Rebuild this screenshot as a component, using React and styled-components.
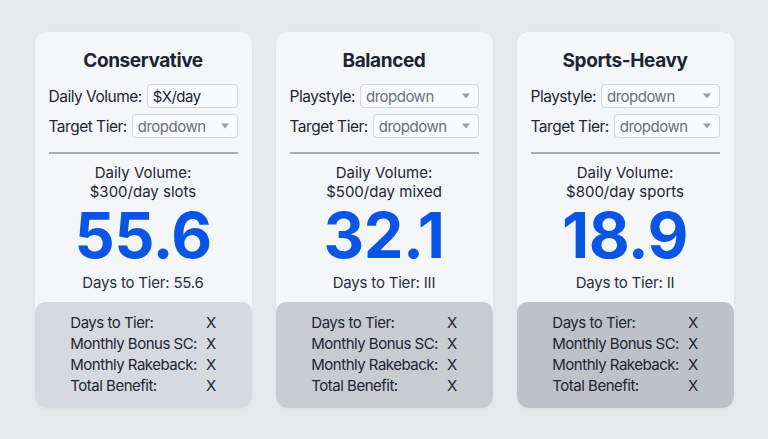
import React from 'react'
import styled, { createGlobalStyle } from 'styled-components'

const GlobalStyle = createGlobalStyle`
  html, body {
    margin: 0;
    padding: 0;
    background: #e6e8ec;
    font-family: Inter, "Noto Sans", "Liberation Sans", sans-serif;
    color: #1f2433;
  }
`

const plans = [
  {
    title: 'Conservative',
    first: { label: 'Daily Volume:', value: '$X/day', input: true },
    volume: '$300/day slots',
    days: '55.6',
    tier: '55.6',
    footer: '#d6d9df',
  },
  {
    title: 'Balanced',
    first: { label: 'Playstyle:', value: 'dropdown' },
    volume: '$500/day mixed',
    days: '32.1',
    tier: 'III',
    footer: '#c8cbd0',
  },
  {
    title: 'Sports-Heavy',
    first: { label: 'Playstyle:', value: 'dropdown' },
    volume: '$800/day sports',
    days: '18.9',
    tier: 'II',
    footer: '#bec2c8',
  },
]

const benefits = ['Days to Tier:', 'Monthly Bonus SC:', 'Monthly Rakeback:', 'Total Benefit:']

function Caret() {
  return (
    <svg width="10" height="6" viewBox="0 0 10 6">
      <path d="M1 0.5 L9 0.5 L5 5.5 Z" fill="#9aa0a9" />
    </svg>
  )
}

function Field({ label, value, input }) {
  return (
    <Row>
      <Label>{label}</Label>
      <Box $input={input}>
        <span>{value}</span>
        {!input && <Caret />}
      </Box>
    </Row>
  )
}

function App() {
  return (
    <Page>
      <GlobalStyle />
      {plans.map(p => (
        <Card key={p.title}>
          <Top>
            <Title>{p.title}</Title>
            <Field {...p.first} />
            <Field label="Target Tier:" value="dropdown" />
            <Divider />
            <Volume>
              Daily Volume:
              <br />
              {p.volume}
            </Volume>
            <BigNumber>{p.days}</BigNumber>
            <TierLine>Days to Tier: {p.tier}</TierLine>
          </Top>
          <Footer $bg={p.footer}>
            <BenefitGrid>
              {benefits.map(b => (
                <React.Fragment key={b}>
                  <span>{b}</span>
                  <span>X</span>
                </React.Fragment>
              ))}
            </BenefitGrid>
          </Footer>
        </Card>
      ))}
    </Page>
  )
}

const Page = styled.div`
  display: flex;
  justify-content: center;
  gap: 24px;
  padding-top: 32px;
  height: 439px;
  box-sizing: border-box;
`

const Card = styled.div`
  width: 217px;
  height: 376px;
  background: #f5f6f8;
  border-radius: 12px;
  display: flex;
  flex-direction: column;
  box-shadow: 0 1px 3px rgba(30, 40, 60, 0.04);
`

const Top = styled.div`
  flex: 1;
  padding: 17px 14px 0;
  display: flex;
  flex-direction: column;
  align-items: stretch;
`

const Title = styled.h2`
  margin: 0 0 11px;
  text-align: center;
  font-size: 19px;
  font-weight: 700;
  line-height: 24px;
  color: #1d2333;
  letter-spacing: -0.4px;
`

const Row = styled.div`
  display: flex;
  align-items: center;
  gap: 5px;
  margin-bottom: 6px;
`

const Label = styled.span`
  font-size: 15.5px;
  letter-spacing: -0.5px;
  white-space: nowrap;
  color: #1f2433;
`

const Box = styled.div`
  flex: 1;
  height: 24px;
  box-sizing: border-box;
  border: 1px solid #d3d6dc;
  border-radius: 4px;
  background: #fafbfc;
  display: flex;
  align-items: center;
  justify-content: space-between;
  padding: 0 7px 0 5px;
  font-size: 15px;
  letter-spacing: -0.5px;
  color: ${p => (p.$input ? '#1f2433' : '#6b7079')};
`

const Divider = styled.div`
  height: 2px;
  background: #a7abb3;
  margin: 8px 0 9px;
`

const Volume = styled.div`
  text-align: center;
  font-size: 15px;
  line-height: 19px;
  color: #1f2433;
`

const BigNumber = styled.div`
  text-align: center;
  font-size: 63px;
  font-weight: 700;
  color: #0b55e6;
  line-height: 56px;
  margin-top: 6px;
  letter-spacing: -0.5px;
`

const TierLine = styled.div`
  text-align: center;
  font-size: 15px;
  letter-spacing: -0.2px;
  line-height: 20px;
  margin-top: 10px;
  color: #2a2f3c;
`

const Footer = styled.div`
  height: 106px;
  background: ${p => p.$bg};
  border-radius: 10px 10px 12px 12px;
  display: flex;
  justify-content: center;
  padding-top: 10px;
  box-sizing: border-box;
`

const BenefitGrid = styled.div`
  display: grid;
  grid-template-columns: auto auto;
  column-gap: 9px;
  align-content: start;
  font-size: 15px;
  letter-spacing: -0.5px;
  line-height: 21px;
  color: #1f2433;
`

export default App
